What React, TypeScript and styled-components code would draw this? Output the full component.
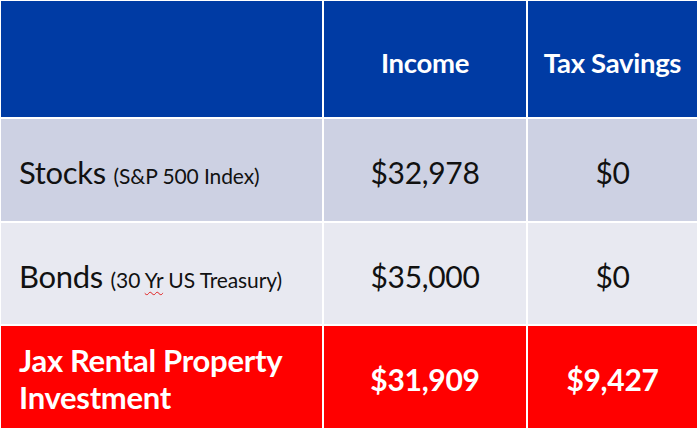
import React from "react";
import styled, { createGlobalStyle } from "styled-components";

const Global = createGlobalStyle`
  html, body { margin: 0; padding: 0; background: #ffffff; }
  body { font-family: Lato, "Open Sans", sans-serif; }
`;

const Table = styled.div`
  display: grid;
  grid-template-columns: 321px 202px 169px;
  grid-template-rows: 116px 102px 101px 102px;
  gap: 2px;
  padding: 1px 0 0 1px;
  width: 700px;
  height: 430px;
  box-sizing: border-box;
  background: #ffffff;
`;

type Tone = "head" | "dark" | "light" | "red";

const bg: Record<Tone, string> = {
  head: "#003ba4",
  dark: "#cdd1e3",
  light: "#e8e9f1",
  red: "#ff0000",
};

const Cell = styled.div<{ $tone: Tone; $align?: "left" | "center" }>`
  background: ${(p) => bg[p.$tone]};
  display: flex;
  align-items: center;
  justify-content: ${(p) => (p.$align === "left" ? "flex-start" : "center")};
  padding: ${(p) => (p.$align === "left" ? "0 0 0 18px" : "0")};
  box-sizing: border-box;
  color: ${(p) => (p.$tone === "head" || p.$tone === "red" ? "#ffffff" : "#111111")};
`;

const HeadText = styled.span`
  font-size: 27.5px;
  font-weight: 700;
  margin-top: 6px;
  letter-spacing: -0.3px;
`;

const Label = styled.span`
  font-size: 31px;
  font-weight: 400;
  margin-top: 4px;
  letter-spacing: -0.3px;
`;

const Note = styled.span`
  font-size: 21px;
  letter-spacing: -0.1px;
`;

const Squiggle = styled.span`
  text-decoration: underline wavy #e02020;
  text-decoration-thickness: 1px;
  text-underline-offset: 3px;
`;

const Amount = styled.span<{ $bold?: boolean }>`
  font-size: 30px;
  font-weight: ${(p) => (p.$bold ? 700 : 400)};
  margin-top: 4px;
  letter-spacing: -0.3px;
`;

const RedLabel = styled.span`
  font-size: 31px;
  font-weight: 700;
  line-height: 37px;
  margin-top: 4px;
  letter-spacing: -0.3px;
`;

export default function App() {
  return (
    <>
      <Global />
      <Table>
        <Cell $tone="head" />
        <Cell $tone="head">
          <HeadText>Income</HeadText>
        </Cell>
        <Cell $tone="head">
          <HeadText>Tax Savings</HeadText>
        </Cell>

        <Cell $tone="dark" $align="left">
          <Label>
            Stocks <Note>(S&amp;P 500 Index)</Note>
          </Label>
        </Cell>
        <Cell $tone="dark">
          <Amount>$32,978</Amount>
        </Cell>
        <Cell $tone="dark">
          <Amount>$0</Amount>
        </Cell>

        <Cell $tone="light" $align="left">
          <Label>
            Bonds{" "}
            <Note>
              (30 <Squiggle>Yr</Squiggle> US Treasury)
            </Note>
          </Label>
        </Cell>
        <Cell $tone="light">
          <Amount>$35,000</Amount>
        </Cell>
        <Cell $tone="light">
          <Amount>$0</Amount>
        </Cell>

        <Cell $tone="red" $align="left">
          <RedLabel>
            Jax Rental Property
            <br />
            Investment
          </RedLabel>
        </Cell>
        <Cell $tone="red">
          <Amount $bold>$31,909</Amount>
        </Cell>
        <Cell $tone="red">
          <Amount $bold>$9,427</Amount>
        </Cell>
      </Table>
    </>
  );
}
